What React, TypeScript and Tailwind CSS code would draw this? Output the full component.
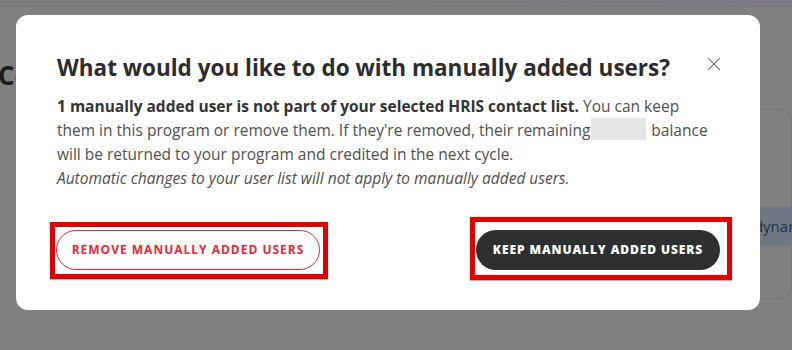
import { X } from 'lucide-react';

const FONT = "font-['Open_Sans','Noto_Sans',sans-serif]";

function BackgroundPage() {
  return (
    <div className="flex h-full w-full flex-col bg-[#808080]">
      <div className="h-[7px] w-full border-b border-[#747474] bg-gradient-to-r from-[#7c7c7c] via-[#7c7c7c] to-[#7e7986]" />
      <h1 className="-ml-[2px] mt-[54px] text-[26px] font-bold leading-[28px] text-[#1b1b1b]">
        Configure programs
      </h1>
      <div className="mt-[20px] flex gap-[25px] pl-[25px]">
        <div className="h-[190px] w-[326px] rounded-xl border border-[#767676]" />
        <div className="flex h-[190px] flex-1 flex-col rounded-xl border border-[#767676] pt-[97px]">
          <div className="ml-auto flex h-[39px] w-[200px] items-center justify-end bg-[#6f7884] text-[15px] text-[#27303a]">
            <span className="-mr-[22px]">Use dynamic</span>
          </div>
        </div>
      </div>
    </div>
  );
}

function ManualUsersModal() {
  return (
    <div className="absolute left-[16px] top-[15px] w-[744px] rounded-xl bg-white pb-[30px]">
      <div className="flex items-start justify-between pl-[41px] pr-[40px] pt-[38px]">
        <h2 className="text-[22.5px] font-bold leading-[30px] text-[#2c2c2e]">
          What would you like to do with manually added users?
        </h2>
        <button className="-mr-[5px] text-[#555]">
          <X className="h-[22px] w-[22px]" strokeWidth={1.1} />
        </button>
      </div>

      <div className="mt-[11px] pl-[41px] pr-[40px] text-[15.5px] leading-[24px] text-[#4f4f4f]">
        <p className="whitespace-nowrap">
          <strong className="font-bold text-[#333]">
            1 manually added user is not part of your selected HRIS contact list.
          </strong>{' '}
          You can keep
          <br />
          them in this program or remove them. If they're removed, their remaining
          <span className="mx-[1px] inline-block h-[22px] w-[55px] bg-[#e6e6e6] align-[-4px]" />
          {' '}balance
          <br />
          will be returned to your program and credited in the next cycle.
        </p>
        <p className="italic">
          Automatic changes to your user list will not apply to manually added users.
        </p>
      </div>

      <div className="mt-[27px] flex items-start justify-between pl-[34px] pr-[28px]">
        <div className="mt-[5px] border-[5px] border-[#e00000] pb-[4px] pl-[1px] pr-[3px] pt-[3px] shadow-[0_1px_1px_rgba(0,0,0,0.3)]">
          <button className="flex h-[40px] w-[264px] items-center justify-center rounded-full border border-[#e3283c] text-[12px] font-bold tracking-[1px] text-[#e3283c]">
            REMOVE MANUALLY ADDED USERS
          </button>
        </div>
        <div className="border-[5px] border-[#e00000] pb-[5px] pl-[1px] pr-[7px] pt-[8px] shadow-[0_1px_1px_rgba(0,0,0,0.3)]">
          <button className="flex h-[40px] w-[244px] items-center justify-center rounded-full bg-[#2e2f31] text-[12px] font-extrabold tracking-[0.9px] text-white">
            KEEP MANUALLY ADDED USERS
          </button>
        </div>
      </div>
    </div>
  );
}

export default function App() {
  return (
    <div className={`relative h-[350px] w-[792px] overflow-hidden ${FONT}`}>
      <BackgroundPage />
      <ManualUsersModal />
    </div>
  );
}
